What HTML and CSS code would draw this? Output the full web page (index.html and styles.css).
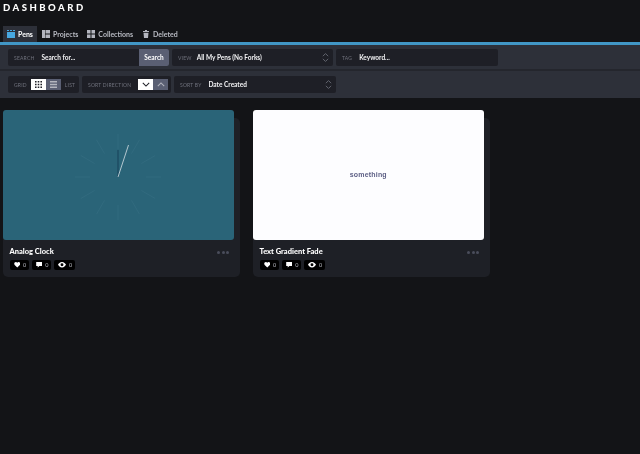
FILE: index.html
```html
<!DOCTYPE html>
<html lang="en">
<head>
  <meta charset="UTF-8" />
  <meta name="viewport" content="width=device-width, initial-scale=1" />
  <title>Dashboard</title>
  <link rel="stylesheet" href="styles.css">
</head>
<body>

  <h1 class="page-title">DASHBOARD</h1>

  <nav class="tabs">
    <a class="tab tab-active">
      <svg class="tab-icon" viewBox="0 0 8 8"><path fill="#47a8e0" d="M0 0h2v1H0zM3 0h2v1H3zM6 0h2v1H6zM0 2h8v6H0z"/></svg>
      Pens
    </a>
    <a class="tab">
      <svg class="tab-icon" viewBox="0 0 8 8"><path fill="#b4b6bf" d="M0 0h3v8H0zM3.500 0H8v3.500H3.500zM3.500 4.500H8V8H3.500z"/></svg>
      Projects
    </a>
    <a class="tab">
      <svg class="tab-icon" viewBox="0 0 8 8"><path fill="#b4b6bf" d="M0 0h3.500v3.500H0zM4.500 0H8v3.500H4.500zM0 4.500h3.500V8H0zM4.500 4.500H8V8H4.500z"/></svg>
      Collections
    </a>
    <a class="tab">
      <svg class="tab-icon" viewBox="0 0 8 8"><path fill="#b4b6bf" d="M3 0h2v1h2v1H1V1h2zM1.500 2.800h5L6 8H2z"/></svg>
      Deleted
    </a>
  </nav>

  <div class="filters">
    <div class="filter-row">
      <div class="field field-search">
        <span class="field-label">Search</span>
        <span class="field-value">Search for...</span>
        <button class="search-btn">Search</button>
      </div>
      <div class="field field-view">
        <span class="field-label">View</span>
        <span class="field-value">All My Pens (No Forks)</span>
        <svg class="updown" viewBox="0 0 8 12"><path d="M1 4.500 4 1.500l3 3M1 7.500l3 3 3-3"/></svg>
      </div>
      <div class="field field-tag">
        <span class="field-label">Tag</span>
        <span class="field-value">Keyword...</span>
      </div>
    </div>
    <div class="filter-row filter-row-2">
      <div class="field field-grid">
        <span class="field-label">Grid</span>
        <div class="toggle">
          <span class="toggle-btn toggle-on toggle-grid">
            <svg viewBox="0 0 9 9"><path fill="#1e1f26" d="M0 0h2v2H0zM3.500 0h2v2h-2zM7 0h2v2H7zM0 3.500h2v2H0zM3.500 3.500h2v2h-2zM7 3.500h2v2H7zM0 7h2v2H0zM3.500 7h2v2h-2zM7 7h2v2H7z"/></svg>
          </span>
          <span class="toggle-btn toggle-list">
            <svg viewBox="0 0 9 9"><path fill="#b4b6bf" d="M0 0h9v2H0zM0 3.500h9v2H0zM0 7h9v2H0z"/></svg>
          </span>
        </div>
        <span class="field-label">List</span>
      </div>
      <div class="field field-direction">
        <span class="field-label">Sort Direction</span>
        <div class="toggle">
          <span class="toggle-btn toggle-on toggle-arrow">
            <svg viewBox="0 0 10 6"><path class="chev-dark" d="M1 1l4 4 4-4"/></svg>
          </span>
          <span class="toggle-btn toggle-arrow">
            <svg viewBox="0 0 10 6"><path class="chev-light" d="M1 5l4-4 4 4"/></svg>
          </span>
        </div>
      </div>
      <div class="field field-sort">
        <span class="field-label">Sort By</span>
        <span class="field-value">Date Created</span>
        <svg class="updown" viewBox="0 0 8 12"><path d="M1 4.500 4 1.500l3 3M1 7.500l3 3 3-3"/></svg>
      </div>
    </div>
  </div>

  <main class="grid">
    <article class="card">
      <div class="preview preview-clock">
        <svg class="clock" viewBox="0 0 100 100">
          <g class="ticks">
            <path d="M50 7v15M50 93V78M7 50h15M93 50H78"/>
            <path d="M28.500 12.800l8 13.800M71.500 12.800l-8 13.800M28.500 87.200l8-13.800M71.500 87.200l-8-13.800"/>
            <path d="M12.800 28.500l13.800 8M87.200 28.500l-13.800 8M12.800 71.500l13.800-8M87.200 71.500l-13.800-8"/>
          </g>
          <path class="hand-hour" d="M50 50V23"/>
          <path class="hand-minute" d="M50 50L60.500 18"/>
        </svg>
      </div>
      <div class="card-body">
        <div class="card-info">
          <h2 class="card-title">Analog Clock</h2>
          <div class="stats">
            <span class="stat"><svg viewBox="0 0 10 9"><path d="M5 9 .8 4.800C-.9 2.800.5 0 2.700 0 3.800 0 4.500.6 5 1.300 5.500.6 6.200 0 7.300 0c2.200 0 3.600 2.800 1.900 4.800z"/></svg>0</span>
            <span class="stat"><svg viewBox="0 0 10 9"><path d="M0 0h10v6.500H5L2.500 9V6.500H0z"/></svg>0</span>
            <span class="stat stat-views"><svg viewBox="0 0 12 8"><path fill-rule="evenodd" d="M6 0c3 0 5 2.500 6 4-1 1.500-3 4-6 4S1 5.500 0 4c1-1.500 3-4 6-4zm0 1.800a2.200 2.200 0 1 0 0 4.400 2.200 2.200 0 0 0 0-4.400z"/></svg>0</span>
          </div>
        </div>
        <div class="dots"><i></i><i></i><i></i></div>
      </div>
    </article>

    <article class="card">
      <div class="preview preview-text">something</div>
      <div class="card-body">
        <div class="card-info">
          <h2 class="card-title">Text Gradient Fade</h2>
          <div class="stats">
            <span class="stat"><svg viewBox="0 0 10 9"><path d="M5 9 .8 4.800C-.9 2.800.5 0 2.700 0 3.800 0 4.500.6 5 1.300 5.500.6 6.200 0 7.300 0c2.200 0 3.600 2.800 1.900 4.800z"/></svg>0</span>
            <span class="stat"><svg viewBox="0 0 10 9"><path d="M0 0h10v6.500H5L2.500 9V6.500H0z"/></svg>0</span>
            <span class="stat stat-views"><svg viewBox="0 0 12 8"><path fill-rule="evenodd" d="M6 0c3 0 5 2.500 6 4-1 1.500-3 4-6 4S1 5.500 0 4c1-1.500 3-4 6-4zm0 1.800a2.200 2.200 0 1 0 0 4.400 2.200 2.200 0 0 0 0-4.400z"/></svg>0</span>
          </div>
        </div>
        <div class="dots"><i></i><i></i><i></i></div>
      </div>
    </article>
  </main>

</body>
</html>
```

FILE: styles.css
```css
* {
  box-sizing: border-box;
}
body {
  margin: 0;
  background: #131417;
  color: #fff;
  font-family: Lato, "Open Sans", sans-serif;
  font-size: 7px;
}
.page-title, .tabs, .filter-row, .grid {
  will-change: transform;
}
.page-title {
  margin: 0;
  padding: 2px 0 0 3px;
  height: 26px;
  font-size: 9.500px;
  line-height: 11px;
  font-weight: 900;
  letter-spacing: 2.500px;
}

/* Tabs */
.tabs {
  display: flex;
  gap: 1px;
  padding-left: 3px;
  height: 19px;
  border-bottom: 3px solid #4197c6;
}
.tab {
  display: flex;
  align-items: center;
  gap: 3px;
  padding: 0 4px;
  font-size: 7px;
  font-weight: 700;
  color: #b9bbc3;
}
.tab-active {
  background: #2d3039;
  color: #fff;
}
.tab-icon {
  width: 8px;
  height: 8px;
}

/* Filters */
.filters {
  background: #2d3039;
  margin-bottom: 20px;
}
.filter-row {
  display: flex;
  gap: 3px;
  height: 26px;
  padding: 4px 8px 0;
  border-bottom: 2px solid #24262d;
}
.filter-row-2 {
  height: 27px;
  padding-top: 5px;
  border-bottom: 0;
}
.field {
  display: flex;
  align-items: center;
  height: 17px;
  background: #1e1f26;
  border-radius: 2px;
  padding: 0 6px;
}
.field-label {
  text-transform: uppercase;
  white-space: nowrap;
  font-size: 5px;
  letter-spacing: .2px;
  color: #70727d;
}
.field-value {
  font-size: 6.500px;
  font-weight: 700;
  color: #f2f2f4;
  margin-left: 7px;
}
.field-search {
  width: 161px;
  padding-right: 0;
}
.field-view {
  width: 161px;
}
.field-view .field-value {
  margin-left: 5px;
}
.field-tag {
  width: 162px;
}
.field-grid {
  width: 71px;
  gap: 4px;
}
.field-direction {
  width: 89px;
  gap: 7px;
}
.field-sort {
  width: 162px;
}
.search-btn {
  margin-left: auto;
  width: 30px;
  height: 17px;
  padding: 0;
  border: 0;
  border-radius: 0 2px 2px 0;
  background: #5a5f73;
  color: #fff;
  font-family: inherit;
  font-size: 6.500px;
  font-weight: 700;
}
.updown {
  margin-left: auto;
  margin-right: -2px;
  width: 7px;
  height: 11px;
  fill: none;
  stroke: #6c6e79;
  stroke-width: 1;
}

/* Toggles */
.toggle {
  display: flex;
}
.toggle-btn {
  display: flex;
  align-items: center;
  justify-content: center;
  height: 11px;
  width: 15px;
  background: #5a5f73;
}
.toggle-on {
  background: #fff;
}
.toggle-grid svg, .toggle-list svg {
  width: 7px;
  height: 7px;
}
.toggle-arrow svg {
  width: 8px;
  height: 5px;
  fill: none;
  stroke-width: 1.300;
}
.chev-dark {
  stroke: #1e1f26;
}
.chev-light {
  stroke: #b4b6bf;
}

/* Cards */
.grid {
  display: flex;
  gap: 13px;
  padding: 0 3px;
}
.card {
  width: 237px;
  height: 159px;
  background: #1e2026;
  border-radius: 5px;
}
.preview {
  width: 230.500px;
  height: 130px;
  margin-top: -8px;
  border-radius: 3px;
  display: flex;
  align-items: center;
  justify-content: center;
}
.preview-clock {
  background: #2a6478;
}
.preview-text {
  background: #fdfdff;
  color: #5d5f85;
  font-family: "Liberation Sans", Arial, sans-serif;
  font-weight: 700;
  font-size: 7px;
  letter-spacing: .2px;
  padding-bottom: 1px;
}
.clock {
  width: 100px;
  height: 100px;
  margin-top: 4px;
  fill: none;
}
.ticks {
  stroke: #4d8295;
  stroke-width: .4;
  opacity: .55;
}
.hand-hour {
  stroke: #174058;
  stroke-width: 1;
}
.hand-minute {
  stroke: #d5e0e4;
  stroke-width: .8;
}
.card-body {
  display: flex;
  justify-content: space-between;
  padding: 7px 11px 0 6.500px;
}
.card-title {
  margin: 0 0 3px;
  font-size: 7.500px;
  line-height: 10px;
  font-weight: 900;
  color: #fff;
}
.stats {
  display: flex;
  gap: 2.500px;
}
.stat {
  display: flex;
  align-items: center;
  gap: 3px;
  height: 10px;
  padding: 0 3px 0 4px;
  background: #000;
  border-radius: 2px;
  font-size: 5.500px;
  color: #b9bbc3;
}
.stat svg {
  width: 6.500px;
  height: 5.500px;
  fill: #fff;
}
.stat-views svg {
  width: 8px;
}
.dots {
  display: flex;
  gap: 1.300px;
  padding-top: 3.500px;
}
.dots i {
  width: 3px;
  height: 3px;
  border-radius: 50%;
  background: #4a4d5b;
}
```
